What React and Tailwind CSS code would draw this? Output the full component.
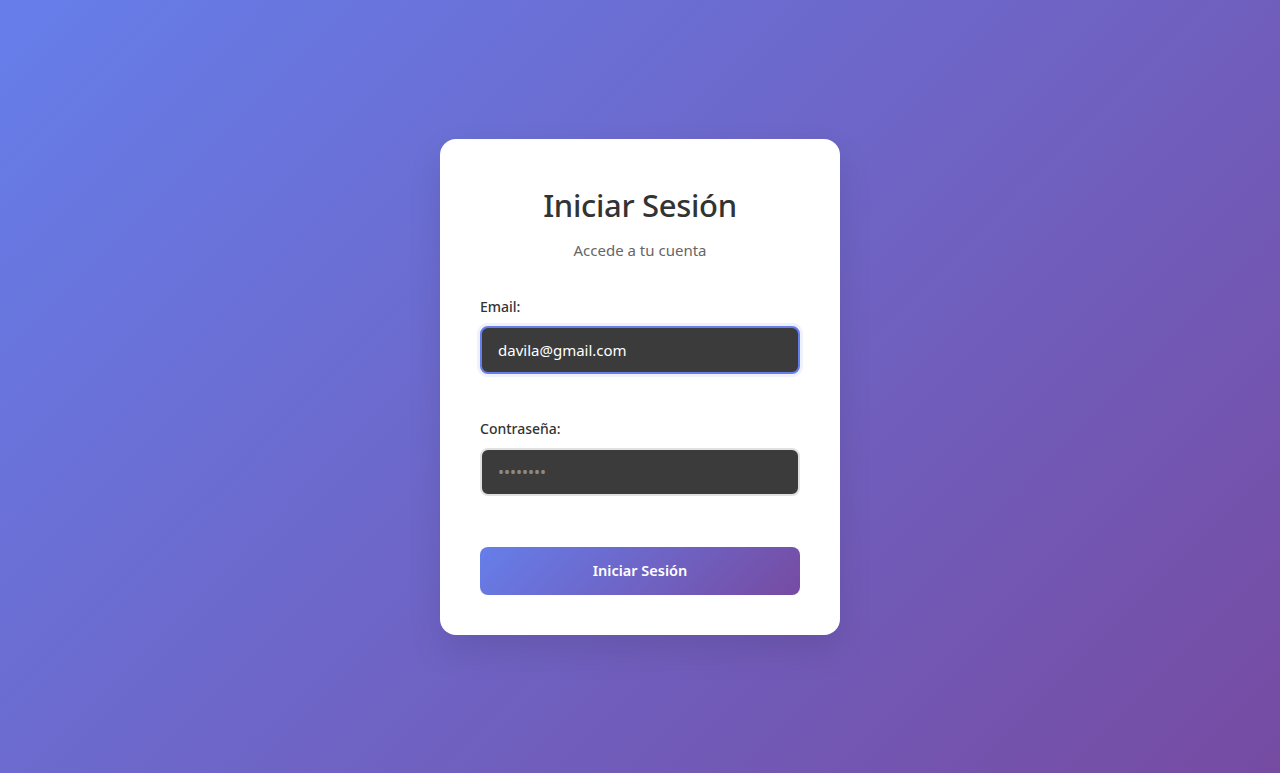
export default function App() {
    return (
        <div
            className="flex min-h-screen items-center justify-center bg-[linear-gradient(135deg,#667eea_0%,#764ba2_100%)]"
            style={{ fontFamily: '"Noto Sans", "Open Sans", sans-serif' }}
        >
            <div className="w-[400px] rounded-[16px] bg-white px-10 pb-10 pt-[42px] shadow-[0_15px_35px_rgba(0,0,0,0.1)]">
                <h1 className="text-center text-[31px] font-medium leading-[48px] tracking-[-0.3px] text-[#333]">
                    Iniciar Sesión
                </h1>
                <p className="mt-[9px] text-center text-[15px] leading-6 text-[#666]">
                    Accede a tu cuenta
                </p>

                <form className="mt-[35px]" onSubmit={(e) => e.preventDefault()}>
                    <div>
                        <label className="mb-[9px] block text-[14px] font-medium leading-5 text-[#333]">
                            Email:
                        </label>
                        <input
                            type="email"
                            defaultValue="davila@gmail.com"
                            className="h-12 w-full rounded-[8px] border-2 border-[#667eea] bg-[#3b3b3b] px-4 text-[15px] text-white caret-white shadow-[0_0_0_3px_rgba(102,126,234,0.1)] outline-none"
                        />
                    </div>

                    <div className="mt-[45px]">
                        <label className="mb-[9px] block text-[14px] font-medium leading-5 text-[#333]">
                            Contraseña:
                        </label>
                        <input
                            type="password"
                            placeholder="••••••••"
                            className="h-12 w-full rounded-[8px] border-2 border-[#e1e1e1] bg-[#3b3b3b] px-4 text-[16px] text-white outline-none placeholder:text-[#8a8a8a]"
                        />
                    </div>

                    <button
                        type="submit"
                        className="mt-[51px] h-12 w-full rounded-[8px] bg-[linear-gradient(135deg,#667eea_0%,#764ba2_100%)] text-[14.5px] font-semibold text-white"
                    >
                        Iniciar Sesión
                    </button>
                </form>
            </div>
        </div>
    );
}
